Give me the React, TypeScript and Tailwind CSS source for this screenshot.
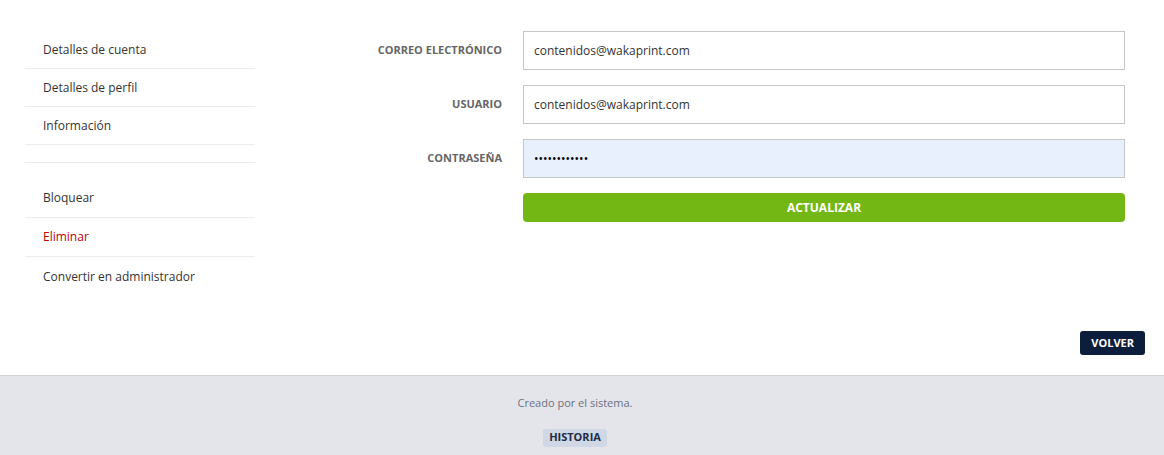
import React from "react";

const MENU_TOP = ["Detalles de cuenta", "Detalles de perfil", "Información"];

const MENU_BOTTOM = [
  { label: "Bloquear", danger: false },
  { label: "Eliminar", danger: true },
  { label: "Convertir en administrador", danger: false },
];

const FIELDS = [
  { label: "Correo electrónico", value: "contenidos@wakaprint.com", type: "text" },
  { label: "Usuario", value: "contenidos@wakaprint.com", type: "text" },
  { label: "Contraseña", value: "wakaprint123", type: "password" },
];

const App = () => {
  return (
    <div className="min-h-[455px] bg-white flex flex-col font-['Open_Sans',sans-serif]">
      <div className="flex px-[25px] pt-[31px]">
        {/* Sidebar */}
        <aside className="w-[230px] shrink-0">
          <ul>
            {MENU_TOP.map((item) => (
              <li
                key={item}
                className="h-[38px] flex items-center pl-[18px] border-b border-[#ebebeb] text-[12px] text-[#333]"
              >
                {item}
              </li>
            ))}
            <li className="h-[18px] border-b border-[#ebebeb]" />
          </ul>
          <ul className="mt-[16px]">
            {MENU_BOTTOM.map((item, i) => (
              <li
                key={item.label}
                className={`h-[39px] flex items-center pl-[18px] text-[12px] ${
                  i < MENU_BOTTOM.length - 1 ? "border-b border-[#ebebeb]" : ""
                } ${item.danger ? "text-[#c00000]" : "text-[#333]"}`}
              >
                {item.label}
              </li>
            ))}
          </ul>
        </aside>

        {/* Form */}
        <form className="flex-1 pl-[20px] pr-[14px]">
          <div className="grid grid-cols-[227px_1fr] gap-x-[21px] gap-y-[15px] items-center">
            {FIELDS.map((f) => (
              <React.Fragment key={f.label}>
                <label className="text-right text-[11px] font-bold uppercase text-[#666]">
                  {f.label}
                </label>
                <input
                  type={f.type}
                  defaultValue={f.value}
                  readOnly
                  className={`h-[39px] w-full border border-[#c6c6c6] px-[10px] text-[12px] outline-none ${
                    f.type === "password" ? "bg-[#e8f0fe] text-black" : "bg-white text-[#333]"
                  }`}
                />
              </React.Fragment>
            ))}
            <div />
            <button
              type="button"
              className="h-[29px] w-full rounded-[4px] bg-[#72b713] text-white text-[12px] font-bold uppercase"
            >
              Actualizar
            </button>
          </div>
        </form>
      </div>

      <div className="flex justify-end px-[19px] mt-[35px] mb-[20px]">
        <button
          type="button"
          className="h-[24px] px-[11px] rounded-[3px] bg-[#0c1e3c] text-white text-[11px] font-bold uppercase"
        >
          Volver
        </button>
      </div>

      {/* Footer */}
      <footer className="flex-1 border-t border-[#d2d2d6] bg-[#e4e5ea] flex flex-col items-center pr-[14px] pt-[19px] pb-[8px]">
        <p className="text-[11px] text-[#6c7080]">Creado por el sistema.</p>
        <span className="mt-[17px] h-[18px] px-[6px] flex items-center rounded-[3px] bg-[#cfd8e4] text-[11px] font-bold uppercase text-[#1f2b44]">
          Historia
        </span>
      </footer>
    </div>
  );
};

export default App;
